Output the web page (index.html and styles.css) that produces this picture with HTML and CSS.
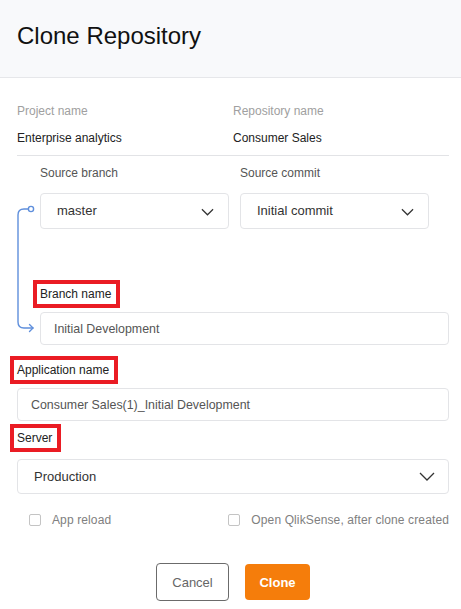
FILE: index.html
```html
<!DOCTYPE html>
<html lang="en">
<head>
<meta charset="utf-8">
<title>Clone Repository</title>
<link rel="stylesheet" href="styles.css">
</head>
<body>
<div class="dialog">
  <header class="head">
    <h1 class="title">Clone Repository</h1>
  </header>
  <div class="content">
    <div class="info">
      <div class="info-col">
        <div class="info-label">Project name</div>
        <div class="info-value">Enterprise analytics</div>
      </div>
      <div class="info-col">
        <div class="info-label">Repository name</div>
        <div class="info-value">Consumer Sales</div>
      </div>
    </div>

    <div class="branch-section">
      <svg class="connector" width="30" height="190" viewBox="0 0 30 190" fill="none" stroke="#5f8fdc" stroke-width="1.4" stroke-linecap="round" stroke-linejoin="round">
        <circle cx="14" cy="53" r="2.6" fill="#fff"/>
        <path d="M11.4 53 H7 Q1 53 1 59 V166 Q1 172 7 172 H16"/>
        <path d="M12.5 168.5 L16 172 L12.5 175.5"/>
      </svg>
      <div class="source-row">
        <div class="field">
          <div class="field-label">Source branch</div>
          <div class="select small"><span>master</span>
            <svg class="chev" width="14" height="8" viewBox="0 0 14 8" fill="none" stroke="#333" stroke-width="1.3"><path d="M1 1 L7 7 L13 1"/></svg>
          </div>
        </div>
        <div class="field">
          <div class="field-label">Source commit</div>
          <div class="select small"><span>Initial commit</span>
            <svg class="chev" width="14" height="8" viewBox="0 0 14 8" fill="none" stroke="#333" stroke-width="1.3"><path d="M1 1 L7 7 L13 1"/></svg>
          </div>
        </div>
      </div>
      <div class="field branch-field">
        <div class="field-label"><span class="marked">Branch name</span></div>
        <div class="input">Initial Development</div>
      </div>
    </div>

    <div class="field app-field">
      <div class="field-label"><span class="marked">Application name</span></div>
      <div class="input">Consumer Sales(1)_Initial Development</div>
    </div>

    <div class="field server-field">
      <div class="field-label"><span class="marked">Server</span></div>
      <div class="select wide"><span>Production</span>
        <svg class="chev" width="16" height="9" viewBox="0 0 16 9" fill="none" stroke="#333" stroke-width="1.3"><path d="M1 1 L8 8 L15 1"/></svg>
      </div>
    </div>

    <div class="checks">
      <label class="check"><span class="box"></span>App reload</label>
      <label class="check"><span class="box"></span>Open QlikSense, after clone created</label>
    </div>

    <div class="actions">
      <button class="btn cancel">Cancel</button>
      <button class="btn clone">Clone</button>
    </div>
  </div>
</div>
</body>
</html>
```

FILE: styles.css
```css
* { box-sizing: border-box; }
html, body { margin: 0; padding: 0; background: #fff; }
body {
  font-family: "Liberation Sans", Arial, sans-serif;
  color: #222;
  width: 461px;
  height: 609px;
  overflow: hidden;
}
.dialog { display: flex; flex-direction: column; }
.head {
  height: 78px;
  background: #f8f9fb;
  border-bottom: 1px solid #e6e7ea;
  padding: 22px 17px 0;
}
.title {
  margin: 0;
  font-size: 24px;
  font-weight: 400;
  line-height: 28px;
  color: #111;
}
.content {
  padding: 0 12px 0 17px;
  display: flex;
  flex-direction: column;
}
.info {
  display: grid;
  grid-template-columns: 1fr 1fr;
  border-bottom: 1px solid #e2e3e6;
  padding-top: 26px;
  padding-bottom: 10px;
}
.info-label {
  font-size: 12px;
  line-height: 14px;
  color: #a0a0a0;
}
.info-value {
  font-size: 12px;
  line-height: 14px;
  color: #222;
  margin-top: 13px;
}
.branch-section {
  position: relative;
  padding-left: 23px;
  padding-top: 10px;
}
.connector {
  position: absolute;
  left: 0;
  top: 0;
}
.source-row {
  display: flex;
  gap: 11px;
}
.source-row .field { width: 189px; }
.field { display: flex; flex-direction: column; }
.field-label {
  font-size: 12px;
  line-height: 14px;
  color: #444;
}
.source-row .field-label { color: #555; }
.marked {
  display: inline-block;
  outline: 4px solid #ea1c24;
  outline-offset: 3px;
  padding-right: 2px;
  color: #222;
}
.select {
  display: flex;
  align-items: center;
  justify-content: space-between;
  border: 1px solid #e3e4e7;
  border-radius: 4px;
  font-size: 13px;
  color: #333;
}
.select.small {
  height: 36px;
  margin-top: 13px;
  padding: 1px 14px 0 16px;
}
.select.small span { margin-top: -3px; }
.select.wide {
  height: 35px;
  margin-top: 14px;
  padding: 0 13px 0 16px;
}
.chev { display: block; }
.select.small .chev { width: 13px; height: 8px; }
.input {
  height: 33px;
  margin-top: 11px;
  border: 1px solid #e3e4e7;
  border-radius: 4px;
  padding: 0 13px;
  display: flex;
  align-items: center;
  font-size: 12.4px;
  color: #555;
}
.branch-field { margin-top: 58px; }
.app-field { margin-top: 18px; }
.server-field { margin-top: 10px; }
.checks {
  display: flex;
  justify-content: space-between;
  padding-left: 12px;
  margin-top: 19px;
}
.check {
  display: flex;
  align-items: center;
  font-size: 12px;
  line-height: 14px;
  letter-spacing: 0.12px;
  color: #808080;
}
.box {
  width: 12px;
  height: 12px;
  border: 1px solid #c4c4c4;
  border-radius: 2px;
  margin-right: 11px;
}
.actions {
  display: flex;
  justify-content: center;
  gap: 16px;
  margin-top: 36px;
  align-items: center;
}
.btn {
  font-family: "Liberation Sans", Arial, sans-serif;
  font-size: 13px;
  border-radius: 4px;
  cursor: pointer;
}
.cancel {
  width: 73px;
  height: 38px;
  background: #fff;
  border: 1px solid #6b6b6b;
  color: #666;
}
.clone {
  width: 65px;
  height: 36px;
  background: #f57d0b;
  border: none;
  color: #fff;
  font-weight: 700;
}
```
